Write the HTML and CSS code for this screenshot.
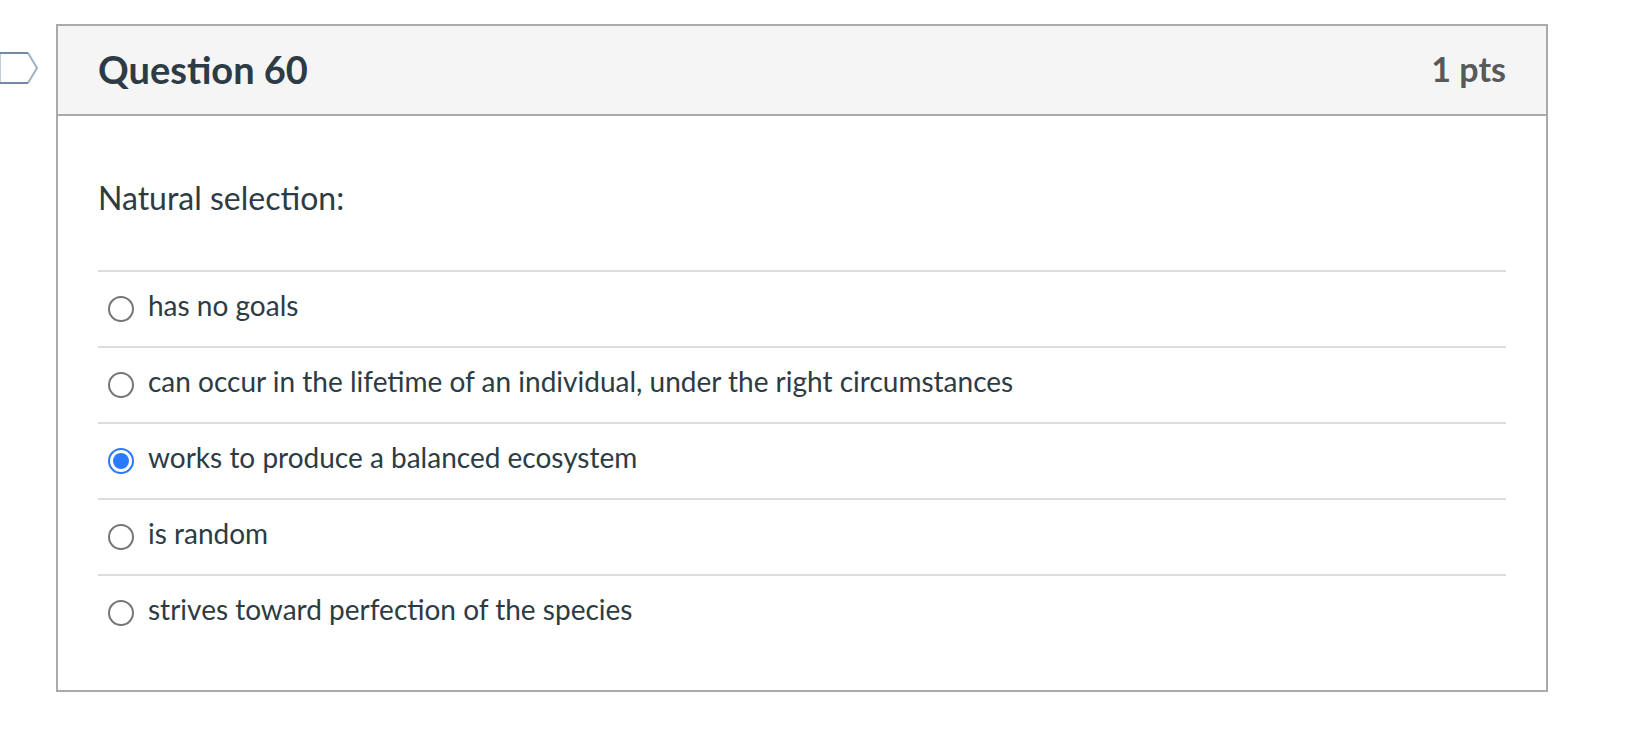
FILE: index.html
```html
<!DOCTYPE html>
<html lang="en">
<head>
  <meta charset="utf-8">
  <title>Question 60</title>
  <link rel="stylesheet" href="styles.css">
</head>
<body>

<div class="question_holder">
  <button type="button" class="flag_question" aria-label="Flag question">
    <svg width="38" height="32" viewBox="0 0 38 32" fill="none" stroke-width="2">
      <path d="M0 0V32" stroke="#c3d0db"/>
      <path d="M28 1L37 16L28 31" stroke="#9db2c4"/>
      <path d="M0 1H28M0 31H28" stroke="#6f8ca6"/>
    </svg>
  </button>

  <form class="question">
    <div class="header">
      <h2 class="name">Question 60</h2>
      <span class="points">1 pts</span>
    </div>

    <fieldset class="text">
      <legend class="question_text">Natural selection:</legend>
      <div class="answers">
        <label class="answer"><input type="radio" name="question_60" value="1"><span>has no goals</span></label>
        <label class="answer"><input type="radio" name="question_60" value="2"><span>can occur in the lifetime of an individual, under the right circumstances</span></label>
        <label class="answer"><input type="radio" name="question_60" value="3" checked><span>works to produce a balanced ecosystem</span></label>
        <label class="answer"><input type="radio" name="question_60" value="4"><span>is random</span></label>
        <label class="answer"><input type="radio" name="question_60" value="5"><span>strives toward perfection of the species</span></label>
      </div>
    </fieldset>
  </form>
</div>

</body>
</html>
```
FILE: styles.css
```css
* {
  box-sizing: border-box;
}
body {
  margin: 0;
  background: #fff;
  color: #2d3b45;
  font: 28px/40px Lato, "Liberation Sans", sans-serif;
}
.question_holder {
  display: flex;
  align-items: flex-start;
  padding: 24px 80px 24px 0;
}
.flag_question {
  flex: none;
  width: 56px;
  padding: 28px 0 0;
  border: 0;
  background: none;
  text-align: left;
  cursor: pointer;
}
.flag_question svg {
  display: block;
}
.question {
  flex: 1;
  border: 2px solid #aaa;
}
.header {
  display: flex;
  align-items: center;
  justify-content: space-between;
  padding: 19px 40px 21px;
  border-bottom: 2px solid #aaa;
  background: #f5f5f5;
}
.name {
  margin: 0;
  font-size: 38px;
  line-height: 48px;
  font-weight: bold;
}
.points {
  color: #595959;
  font-size: 34px;
  line-height: 48px;
  font-weight: bold;
}
.text {
  margin: 0;
  padding: 58px 40px 40px;
  border: 0;
}
.question_text {
  float: left;
  width: 100%;
  margin-bottom: 48px;
  padding: 0;
  font-size: 32px;
  line-height: 48px;
}
.answers {
  clear: both;
}
.answer {
  display: flex;
  align-items: center;
  gap: 14px;
  padding: 13px 10px 21px;
  border-top: 2px solid #ddd;
  cursor: pointer;
}
.answer input {
  appearance: none;
  flex: none;
  width: 26px;
  height: 26px;
  margin: 8px 0 0;
  border: 2px solid #767676;
  border-radius: 50%;
  background: #fff;
}
.answer input:checked {
  padding: 3px;
  border-color: #2a7aff;
  background: #2a7aff content-box;
}
```
